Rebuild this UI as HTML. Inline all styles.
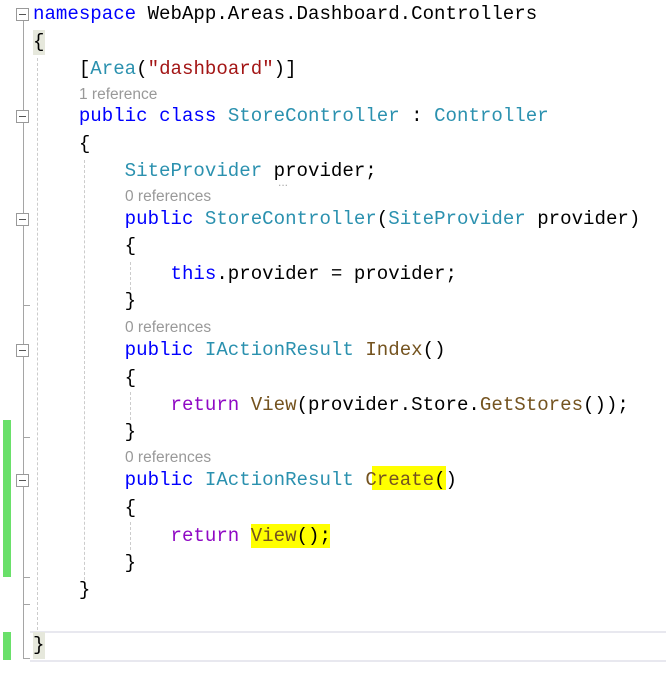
<!DOCTYPE html>
<html><head><meta charset="utf-8"><style>
body{margin:0;width:666px;height:674px;background:#fff;position:relative;overflow:hidden}
.l{position:absolute;height:27px;line-height:27px;font-family:"Liberation Mono",monospace;font-size:19.1px;color:#000;white-space:pre}
.r{position:absolute;font-family:"Liberation Sans",sans-serif;font-size:15.5px;color:#999;line-height:20px;white-space:pre}
.k{color:#0000ff}.t{color:#2b91af}.s{color:#a31515}.m{color:#74531f}.p{color:#8f08c4}
.box{position:absolute;left:16px;width:11px;height:11px;border:1px solid #999;background:#fff}
.box:after{content:"";position:absolute;left:2px;right:2px;top:5px;height:1px;background:#555}
.tk{position:absolute;left:23px;width:7px;height:1px;background:#a5a5a5}
.g{position:absolute;width:0;border-left:1px dashed #ccc}
</style></head><body>
<div style="position:absolute;left:30px;right:0;top:631px;height:27px;border-top:2px solid #e8e8ef;border-bottom:2px solid #e8e8ef"></div>
<div style="position:absolute;left:33px;top:30px;width:12px;height:25px;background:#e6e8dc"></div>
<div style="position:absolute;left:33px;top:632px;width:12px;height:27px;background:#e6e8dc"></div>
<div style="position:absolute;left:3px;top:420px;width:8px;height:157px;background:#6ae06a"></div>
<div style="position:absolute;left:3px;top:632px;width:8px;height:28px;background:#6ae06a"></div>
<div style="position:absolute;left:23px;top:20px;width:1px;height:638px;background:#a5a5a5"></div>
<div class="tk" style="top:305px"></div><div class="tk" style="top:437px"></div><div class="tk" style="top:577px"></div><div class="tk" style="top:604px"></div><div class="tk" style="top:658px"></div>
<div class="box" style="top:8px"></div><div class="box" style="top:110px"></div><div class="box" style="top:213px"></div><div class="box" style="top:344px"></div><div class="box" style="top:474px"></div>
<div class="g" style="left:37px;top:58px;height:572px"></div>
<div class="g" style="left:84px;top:160px;height:420px"></div>
<div class="g" style="left:130px;top:262px;height:28px"></div>
<div class="g" style="left:130px;top:392px;height:28px"></div>
<div class="g" style="left:130px;top:522px;height:28px"></div>
<div style="position:absolute;left:372px;top:466px;width:74px;height:24px;background:#ffff00"></div>
<div style="position:absolute;left:251px;top:524px;width:79px;height:24px;background:#ffff00"></div>
<div class="l" style="left:33px;top:1px"><span class="k">namespace</span> WebApp.Areas.Dashboard.Controllers</div>
<div class="l" style="left:33px;top:29px">{</div>
<div class="l" style="left:33px;top:56px">    [<span class="t">Area</span>(<span class="s">"dashboard"</span>)]</div>
<div class="r" style="left:79px;top:85px">1 reference</div>
<div class="l" style="left:33px;top:103px">    <span class="k">public</span> <span class="k">class</span> <span class="t">StoreController</span> : <span class="t">Controller</span></div>
<div class="l" style="left:33px;top:131px">    {</div>
<div class="l" style="left:33px;top:158px">        <span class="t">SiteProvider</span> provider;</div>
<div class="r" style="left:278px;top:172px;font-size:12px;color:#aaa">...</div>
<div class="r" style="left:125px;top:187px">0 references</div>
<div class="l" style="left:33px;top:206px">        <span class="k">public</span> <span class="t">StoreController</span>(<span class="t">SiteProvider</span> provider)</div>
<div class="l" style="left:33px;top:233px">        {</div>
<div class="l" style="left:33px;top:261px">            <span class="k">this</span>.provider = provider;</div>
<div class="l" style="left:33px;top:288px">        }</div>
<div class="r" style="left:125px;top:318px">0 references</div>
<div class="l" style="left:33px;top:337px">        <span class="k">public</span> <span class="t">IActionResult</span> <span class="m">Index</span>()</div>
<div class="l" style="left:33px;top:365px">        {</div>
<div class="l" style="left:33px;top:392px">            <span class="p">return</span> <span class="m">View</span>(provider.Store.<span class="m">GetStores</span>());</div>
<div class="l" style="left:33px;top:419px">        }</div>
<div class="r" style="left:125px;top:448px">0 references</div>
<div class="l" style="left:33px;top:467px">        <span class="k">public</span> <span class="t">IActionResult</span> <span class="m">Create</span>()</div>
<div class="l" style="left:33px;top:495px">        {</div>
<div class="l" style="left:33px;top:523px">            <span class="p">return</span> <span class="m">View</span>();</div>
<div class="l" style="left:33px;top:550px">        }</div>
<div class="l" style="left:33px;top:577px">    }</div>
<div class="l" style="left:33px;top:632px">}</div>
</body></html>
